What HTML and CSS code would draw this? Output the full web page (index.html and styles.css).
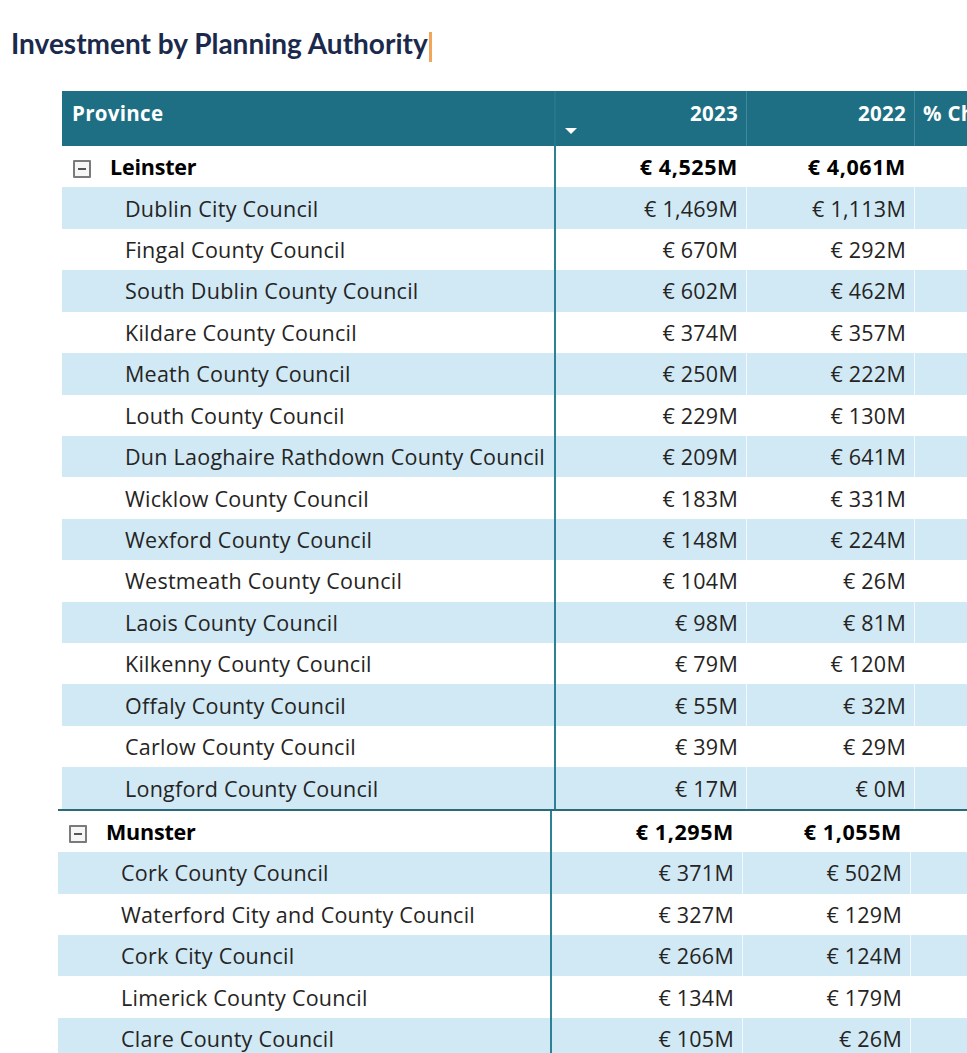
FILE: index.html
```html
<!DOCTYPE html>
<html lang="en">
<head>
<meta charset="utf-8">
<title>Investment by Planning Authority</title>
<link rel="stylesheet" href="styles.css">
</head>
<body>
<div class="visual">
  <h1 class="title"><span>Investment by Planning Authority</span><span class="cursor"></span></h1>
  <div class="matrix">
    <div class="row head">
      <div class="cell name">Province</div>
      <div class="cell sorted"><span>2023</span><span class="sort"></span></div>
      <div class="cell">2022</div>
      <div class="cell left">% Change</div>
    </div>

    <div class="group">
      <div class="row total">
        <div class="cell name"><span class="toggle"></span>Leinster</div>
        <div class="cell">€ 4,525M</div>
        <div class="cell">€ 4,061M</div>
        <div class="cell"></div>
      </div>
      <div class="row alt"><div class="cell name">Dublin City Council</div><div class="cell">€ 1,469M</div><div class="cell">€ 1,113M</div><div class="cell"></div></div>
      <div class="row"><div class="cell name">Fingal County Council</div><div class="cell">€ 670M</div><div class="cell">€ 292M</div><div class="cell"></div></div>
      <div class="row alt"><div class="cell name">South Dublin County Council</div><div class="cell">€ 602M</div><div class="cell">€ 462M</div><div class="cell"></div></div>
      <div class="row"><div class="cell name">Kildare County Council</div><div class="cell">€ 374M</div><div class="cell">€ 357M</div><div class="cell"></div></div>
      <div class="row alt"><div class="cell name">Meath County Council</div><div class="cell">€ 250M</div><div class="cell">€ 222M</div><div class="cell"></div></div>
      <div class="row"><div class="cell name">Louth County Council</div><div class="cell">€ 229M</div><div class="cell">€ 130M</div><div class="cell"></div></div>
      <div class="row alt"><div class="cell name">Dun Laoghaire Rathdown County Council</div><div class="cell">€ 209M</div><div class="cell">€ 641M</div><div class="cell"></div></div>
      <div class="row"><div class="cell name">Wicklow County Council</div><div class="cell">€ 183M</div><div class="cell">€ 331M</div><div class="cell"></div></div>
      <div class="row alt"><div class="cell name">Wexford County Council</div><div class="cell">€ 148M</div><div class="cell">€ 224M</div><div class="cell"></div></div>
      <div class="row"><div class="cell name">Westmeath County Council</div><div class="cell">€ 104M</div><div class="cell">€ 26M</div><div class="cell"></div></div>
      <div class="row alt"><div class="cell name">Laois County Council</div><div class="cell">€ 98M</div><div class="cell">€ 81M</div><div class="cell"></div></div>
      <div class="row"><div class="cell name">Kilkenny County Council</div><div class="cell">€ 79M</div><div class="cell">€ 120M</div><div class="cell"></div></div>
      <div class="row alt"><div class="cell name">Offaly County Council</div><div class="cell">€ 55M</div><div class="cell">€ 32M</div><div class="cell"></div></div>
      <div class="row"><div class="cell name">Carlow County Council</div><div class="cell">€ 39M</div><div class="cell">€ 29M</div><div class="cell"></div></div>
      <div class="row alt"><div class="cell name">Longford County Council</div><div class="cell">€ 17M</div><div class="cell">€ 0M</div><div class="cell"></div></div>
    </div>

    <div class="group shifted">
      <div class="row total">
        <div class="cell name"><span class="toggle"></span>Munster</div>
        <div class="cell">€ 1,295M</div>
        <div class="cell">€ 1,055M</div>
        <div class="cell"></div>
      </div>
      <div class="row alt"><div class="cell name">Cork County Council</div><div class="cell">€ 371M</div><div class="cell">€ 502M</div><div class="cell"></div></div>
      <div class="row"><div class="cell name">Waterford City and County Council</div><div class="cell">€ 327M</div><div class="cell">€ 129M</div><div class="cell"></div></div>
      <div class="row alt"><div class="cell name">Cork City Council</div><div class="cell">€ 266M</div><div class="cell">€ 124M</div><div class="cell"></div></div>
      <div class="row"><div class="cell name">Limerick County Council</div><div class="cell">€ 134M</div><div class="cell">€ 179M</div><div class="cell"></div></div>
      <div class="row alt"><div class="cell name">Clare County Council</div><div class="cell">€ 105M</div><div class="cell">€ 26M</div><div class="cell"></div></div>
    </div>
  </div>
</div>
</body>
</html>
```

FILE: styles.css
```css
html, body {
  margin: 0;
  padding: 0;
  background: #ffffff;
  overflow: hidden;
}

body {
  font-family: "Open Sans", "Noto Sans", sans-serif;
  width: 967px;
  height: 1053px;
}

.title {
  display: flex;
  align-items: flex-start;
  height: 32px;
  margin: 27px 0 0 11px;
  font: 700 28px/32px Lato, "Liberation Sans", sans-serif;
  color: #1b2a4c;
}

.cursor {
  flex: none;
  width: 3px;
  height: 30px;
  margin: 5px 0 0 1px;
  background: #f2a65c;
}

.matrix {
  margin: 32px 0 0 62px;
  width: 1000px;
}

.row {
  display: grid;
  grid-template-columns: 494px 191px 168px 147px;
  height: 41.43px;
  background: #ffffff;
}

.row.alt {
  background: #d0e9f5;
}

.cell {
  display: flex;
  align-items: center;
  justify-content: flex-end;
  padding: 0 8px 0 0;
  font-size: 21.5px;
  letter-spacing: 0.25px;
  color: #252423;
  white-space: nowrap;
  border-right: 1px solid rgba(255, 255, 255, 0.75);
}

.cell.name {
  justify-content: flex-start;
  padding-left: 63px;
  border-right: 2px solid #2c8194;
}

.row.total .cell {
  font-weight: 700;
  letter-spacing: 0.6px;
  color: #000000;
}

.row.total .cell.name {
  padding-left: 11px;
  letter-spacing: -0.2px;
}

.toggle {
  position: relative;
  flex: none;
  width: 14px;
  height: 14px;
  margin: 5px 19px 0 0;
  border: 2px solid #7a7a7a;
  border-radius: 1px;
  background: #f6f6f6;
}

.toggle::after {
  content: "";
  position: absolute;
  left: 3px;
  right: 3px;
  top: 6px;
  height: 2px;
  background: #555555;
}

.row.head {
  height: 55px;
  background: #1e6f84;
}

.row.head .cell {
  align-items: flex-start;
  padding-top: 9px;
  font-size: 20.5px;
  line-height: 26px;
  letter-spacing: 0.3px;
  color: #ffffff;
  font-weight: 700;
  border-right: 1px solid #3e8a9c;
}

.row.head .cell.name {
  padding-left: 10px;
  border-right: 2px solid #2a7689;
}

.row.head .cell.left {
  justify-content: flex-start;
  padding-left: 8px;
}

.row.head .cell.sorted {
  flex-direction: column;
  justify-content: flex-start;
  align-items: flex-end;
}

.sort {
  align-self: flex-start;
  margin: 2px 0 0 9px;
  width: 0;
  height: 0;
  border-left: 6px solid transparent;
  border-right: 6px solid transparent;
  border-top: 6px solid #ffffff;
}

.group.shifted {
  margin-left: -4px;
  border-top: 2px solid #2b6b79;
}
```
